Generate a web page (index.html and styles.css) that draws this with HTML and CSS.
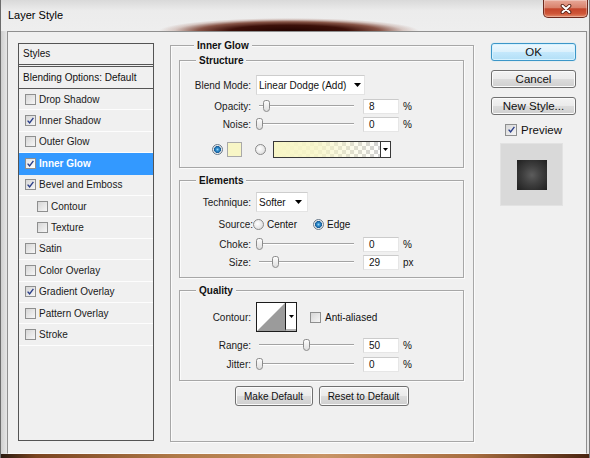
FILE: index.html
```html
<!DOCTYPE html>
<html>
<head>
<meta charset="utf-8">
<title>Layer Style</title>
<link rel="stylesheet" href="styles.css">
</head>
<body>
<div class="window">
  <div class="titlebar">
    <div class="title">Layer Style</div>
    <div class="close">
      <svg width="12" height="10" viewBox="0 0 12 10"><path d="M2.5 1.8 L9.5 8.2 M9.5 1.8 L2.5 8.2" stroke="#5b2418" stroke-width="3.8" stroke-linecap="round"/><path d="M2.5 1.8 L9.5 8.2 M9.5 1.8 L2.5 8.2" stroke="#fff" stroke-width="2" stroke-linecap="round"/></svg>
    </div>
  </div>
  <div class="frame">
    <div class="client">
      <div class="panel">
        <div class="p-head">Styles</div>
        <div class="p-blend">Blending Options: Default</div>
        <div class="item"><span class="cb"></span>Drop Shadow</div>
        <div class="item"><span class="cb"><svg class="tick" viewBox="0 0 9 9"><path d="M1.6 4.6 L3.6 6.8 L7.4 1.8"/></svg></span>Inner Shadow</div>
        <div class="item"><span class="cb"></span>Outer Glow</div>
        <div class="item sel"><span class="cb"><svg class="tick" viewBox="0 0 9 9"><path d="M1.6 4.6 L3.6 6.8 L7.4 1.8"/></svg></span>Inner Glow</div>
        <div class="item"><span class="cb"><svg class="tick" viewBox="0 0 9 9"><path d="M1.6 4.6 L3.6 6.8 L7.4 1.8"/></svg></span>Bevel and Emboss</div>
        <div class="item sub"><span class="cb"></span>Contour</div>
        <div class="item sub"><span class="cb"></span>Texture</div>
        <div class="item"><span class="cb"></span>Satin</div>
        <div class="item"><span class="cb"></span>Color Overlay</div>
        <div class="item"><span class="cb"><svg class="tick" viewBox="0 0 9 9"><path d="M1.6 4.6 L3.6 6.8 L7.4 1.8"/></svg></span>Gradient Overlay</div>
        <div class="item"><span class="cb"></span>Pattern Overlay</div>
        <div class="item"><span class="cb"></span>Stroke</div>
      </div>

      <div class="main">
        <div class="group g-outer">
          <div class="gtitle">Inner Glow</div>

          <div class="group g-sub g-struct">
            <div class="gtitle">Structure</div>
            <div class="row h20 mt8">
              <span class="lbl">Blend Mode:</span>
              <div class="select w-blend"><span>Linear Dodge (Add)</span><svg class="arr" viewBox="0 0 7 4"><path d="M0 0h7L3.5 4z"/></svg></div>
            </div>
            <div class="row h16 mt3">
              <span class="lbl">Opacity:</span>
              <div class="slider"><div class="track"></div><div class="thumb" style="left:7px"></div></div>
              <div class="num">8</div><span class="unit">%</span>
            </div>
            <div class="row h16 mt2">
              <span class="lbl">Noise:</span>
              <div class="slider"><div class="track"></div><div class="thumb" style="left:0px"></div></div>
              <div class="num">0</div><span class="unit">%</span>
            </div>
            <div class="row h18 mt8 color-row">
              <span class="rb on"></span>
              <span class="swatch"></span>
              <span class="rb gap13"></span>
              <div class="grad"><div class="grad-fill"></div><div class="grad-btn"><svg class="arr sm" viewBox="0 0 7 4"><path d="M0 0h7L3.5 4z"/></svg></div></div>
            </div>
          </div>

          <div class="group g-sub g-elem">
            <div class="gtitle">Elements</div>
            <div class="row h20 mt5">
              <span class="lbl">Technique:</span>
              <div class="select w-tech"><span>Softer</span><svg class="arr" viewBox="0 0 7 4"><path d="M0 0h7L3.5 4z"/></svg></div>
            </div>
            <div class="row h14 mt5">
              <span class="lbl src">Source:</span>
              <span class="rb"></span><span class="rtext">Center</span>
              <span class="rb gap16 on"></span><span class="rtext">Edge</span>
            </div>
            <div class="row h16 mt5">
              <span class="lbl">Choke:</span>
              <div class="slider"><div class="track"></div><div class="thumb" style="left:0px"></div></div>
              <div class="num">0</div><span class="unit">%</span>
            </div>
            <div class="row h16 mt2">
              <span class="lbl">Size:</span>
              <div class="slider"><div class="track"></div><div class="thumb" style="left:16px"></div></div>
              <div class="num">29</div><span class="unit">px</span>
            </div>
          </div>

          <div class="group g-sub g-qual">
            <div class="gtitle">Quality</div>
            <div class="row h30 mt5">
              <span class="lbl">Contour:</span>
              <div class="contour">
                <svg class="ccurve" viewBox="0 0 28 28"><path d="M0 28 L28 0 L28 28 Z" fill="#9b9b9b"/></svg>
                <div class="cbtn"><svg class="arr sm" viewBox="0 0 7 4"><path d="M0 0h7L3.5 4z"/></svg></div>
              </div>
              <span class="cb aa"></span><span class="rtext">Anti-aliased</span>
            </div>
            <div class="row h16 mt5">
              <span class="lbl">Range:</span>
              <div class="slider"><div class="track"></div><div class="thumb" style="left:47px"></div></div>
              <div class="num">50</div><span class="unit">%</span>
            </div>
            <div class="row h16 mt3">
              <span class="lbl">Jitter:</span>
              <div class="slider"><div class="track"></div><div class="thumb" style="left:0px"></div></div>
              <div class="num">0</div><span class="unit">%</span>
            </div>
          </div>

          <div class="btns">
            <div class="btn w-make">Make Default</div>
            <div class="btn w-reset">Reset to Default</div>
          </div>
        </div>
      </div>

      <div class="side">
        <div class="sbtn ok">OK</div>
        <div class="sbtn">Cancel</div>
        <div class="sbtn">New Style...</div>
        <div class="prev"><span class="cb big"><svg class="tick" viewBox="0 0 9 9"><path d="M1.6 4.6 L3.6 6.8 L7.4 1.8"/></svg></span><span>Preview</span></div>
        <div class="pbox"><div class="psq"></div></div>
      </div>
    </div>
  </div>
  <div class="bottom"></div>
</div>
</body>
</html>
```

FILE: styles.css
```css
* { box-sizing: border-box; }
html, body { margin: 0; padding: 0; }
body {
  width: 590px;
  height: 458px;
  overflow: hidden;
  font-family: "Liberation Sans", Arial, sans-serif;
  font-size: 10px;
  color: #111;
  background: #5a3018;
}

.window {
  width: 590px;
  height: 458px;
  display: flex;
  flex-direction: column;
  border-left: 1px solid #6c6c6c;
  border-right: 1px solid #7a7a7a;
  background: #e6e6e6;
}

.titlebar {
  height: 31px;
  flex: none;
  display: flex;
  justify-content: space-between;
  align-items: flex-start;
  padding: 0 1px 0 7px;
  background:
    radial-gradient(ellipse 130px 13px at 288px 31px, rgba(34,3,0,1) 0%, rgba(55,9,2,0.97) 45%, rgba(100,32,14,0.75) 70%, rgba(160,110,95,0.3) 88%, rgba(220,220,220,0) 100%),
    linear-gradient(180deg, #d9d9d9 0, #ececec 35%, #eeeeee 100%);
}
.title {
  margin-top: 9px;
  font-size: 11px;
  line-height: 12px;
  color: #000;
}
.close {
  width: 45px;
  height: 18px;
  border: 1px solid #6e2a1e;
  border-top: none;
  border-radius: 0 0 5px 5px;
  background: linear-gradient(180deg, #e8a898 0, #d9826c 45%, #c4452b 52%, #cf5638 80%, #e48b6a 100%);
  box-shadow: inset 0 0 0 1px rgba(255,255,255,0.3);
  display: flex;
  align-items: center;
  justify-content: center;
}

.frame {
  flex: none;
  padding: 0 2px 0 6px;
  background: linear-gradient(90deg, #cfcfcf 0, #e6e6e6 6px);
}
.client {
  height: 423px;
  background: #f0f0f0;
  border: 1px solid #8f8f8f;
  border-bottom-color: #fafafa;
  display: flex;
  align-items: flex-start;
  padding: 11px 0 0 10px;
}
.bottom {
  flex: 1;
  background: linear-gradient(90deg, #2a1a10 0, #7a4420 6%, #b07a48 30%, #c89466 55%, #a86e40 80%, #4a2410 100%);
}

/* left styles panel */
.panel {
  flex: none;
  width: 136px;
  height: 398px;
  border: 1px solid #545454;
  background: #f0f0f0;
}
.p-head {
  height: 23px;
  line-height: 20px;
  padding-left: 4px;
  border-bottom: 3px double #555;
}
.p-blend {
  height: 22px;
  line-height: 21px;
  padding-left: 4px;
  border-bottom: 1px solid #555;
}
.item {
  height: 21.4px;
  display: flex;
  align-items: center;
  gap: 3px;
  padding-left: 6px;
  border-bottom: 1px solid #fdfdfd;
  color: #1a1a1a;
}
.item.sub { padding-left: 18px; }
.item.sel {
  background: #3399ff;
  border-bottom-color: #3399ff;
  color: #fff;
  font-weight: bold;
}

.cb {
  flex: none;
  width: 11px;
  height: 11px;
  border: 1px solid #8e8f8f;
  background: linear-gradient(135deg, #d6d6d6 0, #f6f6f6 100%);
  display: inline-flex;
  align-items: center;
  justify-content: center;
}
.item.sel .cb { background: linear-gradient(135deg, #e4e4e4 0, #ffffff 100%); }
.cb.big { width: 12px; height: 12px; }
.tick {
  width: 9px;
  height: 9px;
  fill: none;
  stroke: #2b3f8a;
  stroke-width: 1.4;
}

/* main */
.main {
  flex: none;
  width: 304px;
  margin: 2px 0 0 16px;
}
.group {
  border: 1px solid #a7a7a7;
  box-shadow: inset 1px 1px 0 #fbfbfb, 1px 1px 0 #fbfbfb;
}
.g-outer { padding: 0 9px 35px 8px; }
.gtitle {
  display: table;
  height: 13px;
  line-height: 13px;
  margin: -7px 0 0 15px;
  padding: 0 3px;
  background: #f0f0f0;
  font-weight: bold;
  color: #111;
}
.g-sub .gtitle { margin-left: 16px; }
.g-struct { margin-top: 8px; padding-bottom: 9px; }
.g-elem { margin-top: 12px; padding-bottom: 7px; }
.g-qual { margin-top: 12px; padding-bottom: 8px; }

.row { display: flex; align-items: center; }
.h14 { height: 14px; }
.h16 { height: 16px; }
.h18 { height: 18px; }
.h20 { height: 20px; }
.h30 { height: 30px; }
.mt2 { margin-top: 2px; }
.mt3 { margin-top: 3px; }
.mt5 { margin-top: 5px; }
.mt8 { margin-top: 8px; }

.lbl {
  flex: none;
  width: 71px;
  margin-right: 5px;
  text-align: right;
  color: #1a1a1a;
}
.lbl.src { width: 73px; margin-right: 0; }

.select {
  height: 20px;
  background: #fff;
  border: 1px solid #e4e4e4;
  border-top-color: #cdcdcd;
  border-left-color: #d6d6d6;
  display: flex;
  align-items: center;
  justify-content: space-between;
  padding: 0 3px 0 2px;
}
.w-blend { width: 109px; }
.w-tech { width: 52px; padding-right: 5px; }
.arr { width: 7px; height: 4px; fill: #000; }
.arr.sm { width: 5px; height: 3px; }

.slider {
  position: relative;
  flex: none;
  width: 100px;
  height: 16px;
  display: flex;
  align-items: center;
}
.track {
  flex: 1;
  height: 2px;
  margin: 0 2px 0 3px;
  border-top: 1px solid #a3a3a3;
  border-bottom: 1px solid #ffffff;
}
.thumb {
  position: absolute;
  top: 2px;
  width: 7px;
  height: 12px;
  border: 1px solid #8b8b8b;
  border-radius: 3px 3px 4px 4px;
  background: linear-gradient(180deg, #fdfdfd 0, #dedede 100%);
}
.num {
  flex: none;
  width: 36px;
  height: 15px;
  margin-left: 7px;
  padding-left: 5px;
  line-height: 13px;
  background: #fff;
  border: 1px solid #e6e6e6;
  border-top-color: #cbcbcb;
  border-left-color: #d8d8d8;
  color: #111;
}
.unit { margin-left: 4px; }

.rb {
  flex: none;
  width: 11px;
  height: 11px;
  border-radius: 50%;
  border: 1px solid #8a8a8a;
  background: radial-gradient(circle at 40% 40%, #ffffff 0, #e6e6e6 60%, #cfcfcf 100%);
}
.rb.on {
  border-color: #6a7a8a;
  background: radial-gradient(circle at 50% 50%, #9ad6f8 0, #2d8ccc 1.6px, #1b5f9a 3.2px, #eeeeee 3.8px, #d8d8d8 100%);
}
.rtext { margin-left: 3px; }
.gap13 { margin-left: 13px; }
.gap16 { margin-left: 16px; }

.color-row { padding-left: 32px; }
.swatch {
  flex: none;
  width: 15px;
  height: 15px;
  margin-left: 4px;
  background: #f8f6c6;
  border: 1px solid #a9a9a9;
}
.grad {
  flex: none;
  width: 118px;
  height: 17px;
  margin-left: 7px;
  border: 1px solid #383838;
  display: flex;
}
.grad-fill {
  flex: 1;
  background:
    linear-gradient(90deg, #f8f6c6 0, rgba(248,246,198,0.85) 40%, rgba(248,246,198,0) 100%),
    repeating-conic-gradient(#d2d2d2 0 25%, #ffffff 0 50%) 0 0 / 8px 8px;
}
.grad-btn {
  width: 10px;
  flex: none;
  border-left: 1px solid #383838;
  background: #fff;
  display: flex;
  align-items: center;
  justify-content: center;
}

.contour {
  flex: none;
  width: 41px;
  height: 30px;
  border: 1px solid #1c1c1c;
  background: #fff;
  display: flex;
}
.ccurve { width: 28px; height: 28px; display: block; }
.cbtn {
  width: 11px;
  border-left: 1px solid #1c1c1c;
  border-bottom: 2px solid #b5b5b5;
  display: flex;
  align-items: center;
  justify-content: center;
}
.cb.aa { margin-left: 13px; }
.cb.aa + .rtext { margin-left: 4px; }

.btns {
  display: flex;
  justify-content: center;
  gap: 6px;
  margin-top: 5px;
}
.btn {
  height: 20px;
  border: 1px solid #707070;
  border-radius: 3px;
  background: linear-gradient(180deg, #f3f3f3 0, #ebebeb 48%, #dcdcdc 52%, #cfcfcf 100%);
  box-shadow: inset 0 0 0 1px #fbfbfb;
  display: flex;
  align-items: center;
  justify-content: center;
  color: #111;
}
.w-make { width: 78px; }
.w-reset { width: 90px; }

/* right side */
.side {
  flex: none;
  width: 85px;
  margin-left: 17px;
  font-size: 11.5px;
}
.sbtn {
  height: 18px;
  margin-bottom: 9px;
  border: 1px solid #707070;
  border-radius: 3px;
  background: linear-gradient(180deg, #f3f3f3 0, #ebebeb 48%, #dcdcdc 52%, #cfcfcf 100%);
  box-shadow: inset 0 0 0 1px #fbfbfb;
  display: flex;
  align-items: center;
  justify-content: center;
  color: #111;
}
.sbtn.ok {
  border-color: #3c96c8;
  background: linear-gradient(180deg, #edf8fe 0, #dcf1fc 48%, #c4e8fc 52%, #b2dff6 100%);
  box-shadow: inset 0 0 0 1px #d6f2ff, 0 0 1px #7fd0f5;
}
.prev {
  height: 13px;
  margin-top: -1px;
  display: flex;
  align-items: center;
  justify-content: center;
  gap: 4px;
}
.pbox {
  width: 63px;
  height: 63px;
  margin: 7px 0 0 9px;
  background: #d9d9d9;
  border: 1px solid #e2e2e2;
  display: flex;
  align-items: center;
  justify-content: center;
}
.psq {
  width: 30px;
  height: 30px;
  background: radial-gradient(circle at 50% 50%, #5c5c5c 0, #3e3e3e 45%, #1f1f1f 100%);
}
```
